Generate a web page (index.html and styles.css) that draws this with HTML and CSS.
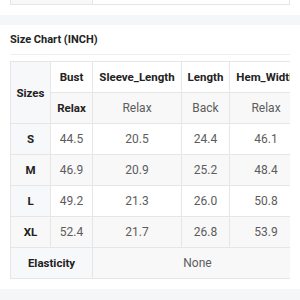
FILE: index.html
```html
<!DOCTYPE html>
<html>
<head>
<meta charset="utf-8">
<link rel="stylesheet" href="styles.css">
</head>
<body>
<div class="prev">
  <div class="prev-cell prev-left"></div>
  <div class="prev-cell prev-right"></div>
</div>
<div class="band band-top"></div>
<section class="chart">
  <h2 class="chart-title">Size Chart (INCH)</h2>
  <div class="table-wrap">
    <table class="size-table">
      <colgroup>
        <col class="c-size"><col class="c-bust"><col class="c-sleeve"><col class="c-length"><col class="c-hem">
      </colgroup>
      <thead>
        <tr class="r-odd">
          <th rowspan="2" class="first">Sizes</th>
          <th>Bust</th>
          <th>Sleeve_Length</th>
          <th>Length</th>
          <th>Hem_Width</th>
        </tr>
        <tr class="r-even">
          <th>Relax</th>
          <td>Relax</td>
          <td>Back</td>
          <td>Relax</td>
        </tr>
      </thead>
      <tbody>
        <tr class="r-odd"><th class="first">S</th><td>44.5</td><td>20.5</td><td>24.4</td><td>46.1</td></tr>
        <tr class="r-even"><th class="first">M</th><td>46.9</td><td>20.9</td><td>25.2</td><td>48.4</td></tr>
        <tr class="r-odd"><th class="first">L</th><td>49.2</td><td>21.3</td><td>26.0</td><td>50.8</td></tr>
        <tr class="r-even"><th class="first">XL</th><td>52.4</td><td>21.7</td><td>26.8</td><td>53.9</td></tr>
        <tr class="r-odd"><th class="first" colspan="2">Elasticity</th><td colspan="3" class="none">None</td></tr>
      </tbody>
    </table>
  </div>
</section>
<div class="band band-bottom"></div>
</body>
</html>
```
FILE: styles.css
```css
html, body {
  margin: 0;
  padding: 0;
  background: #ffffff;
  font-family: Roboto, "Liberation Sans", Arial, sans-serif;
}
.prev {
  display: flex;
  margin: 0 10px;
  height: 4px;
  border-bottom: 1px solid #e6e6e6;
}
.prev-cell {
  border-left: 1px solid #e6e6e6;
}
.prev-left {
  width: 81px;
  background: #f7f8fa;
}
.prev-right {
  flex: 1;
  border-right: 1px solid #e6e6e6;
}
.band {
  background: #f5f6f8;
}
.band-top {
  margin-top: 10px;
  height: 10px;
}
.band-bottom {
  margin-top: 10px;
  height: 15px;
}
.chart {
  padding: 0 10px;
}
.chart-title {
  margin: 0;
  height: 29px;
  line-height: 29px;
  font-size: 11px;
  font-weight: 700;
  color: #222;
  border-bottom: 1px solid #eeeeee;
}
.table-wrap {
  margin-top: 6px;
  width: 280px;
  overflow: hidden;
}
.size-table {
  border-collapse: collapse;
  table-layout: fixed;
  width: 292px;
  font-size: 12px;
  color: #5c5c5c;
}
.c-size { width: 40px; }
.c-bust { width: 42px; }
.c-sleeve { width: 89px; }
.c-length { width: 48px; }
.c-hem { width: 73px; }
.size-table th,
.size-table td {
  border: 1px solid #e6e6e6;
  height: 30px;
  padding: 0;
  text-align: center;
  white-space: nowrap;
  overflow: hidden;
}
.size-table th {
  font-size: 11.5px;
  font-weight: 700;
  color: #222;
}
.size-table .r-even th,
.size-table .r-even td {
  background: #f8f8f9;
}
.size-table .first {
  background: #f7f8fa;
}
.size-table .none {
  background: #f8f8f9;
}
```
